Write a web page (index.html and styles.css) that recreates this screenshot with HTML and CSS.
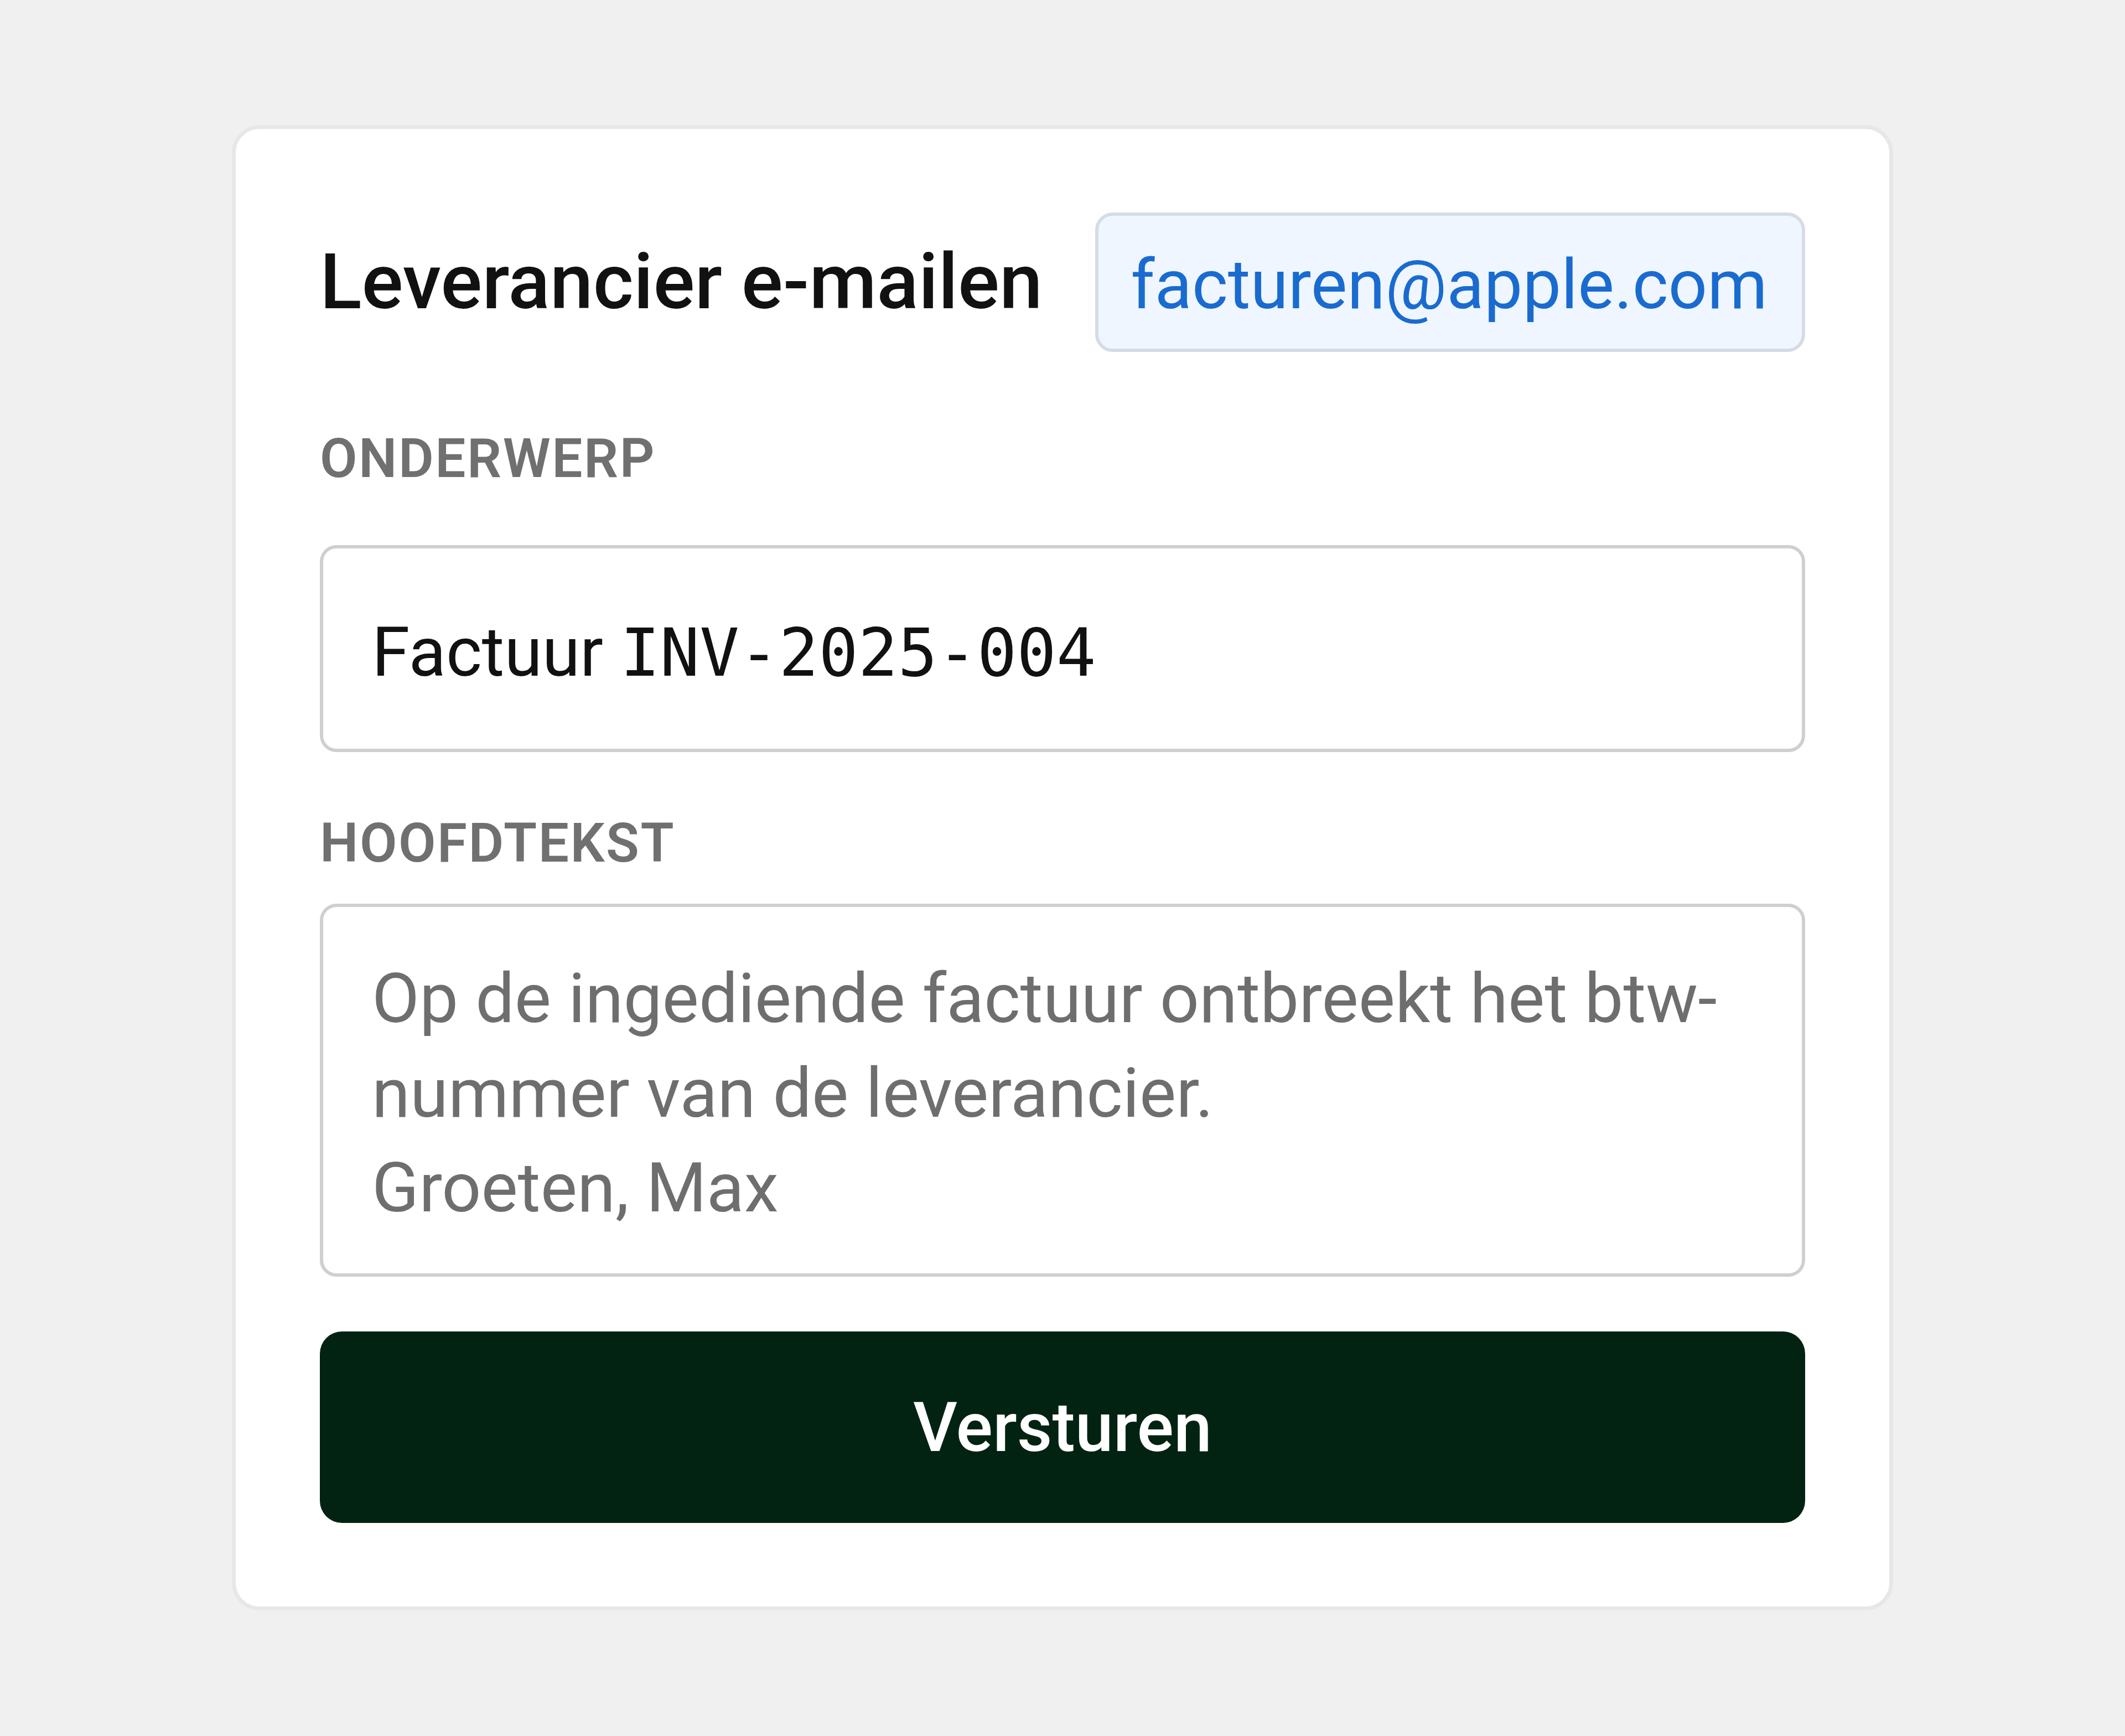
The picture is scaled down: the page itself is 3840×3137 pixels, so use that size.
FILE: index.html
```html
<!DOCTYPE html>
<html lang="nl">
<head>
    <meta charset="UTF-8">
    <meta name="viewport" content="width=device-width, initial-scale=1.0">
    <title>Leverancier e-mailen</title>
    <link rel="stylesheet" href="styles.css">
</head>
<body>
    <div class="kaart">
        <section class="kop">
            <h1 class="titel">Leverancier e-mailen</h1>
            <span class="adres">facturen@apple.com</span>
        </section>
        <p class="label label-onderwerp">ONDERWERP</p>
        <div class="veld">Factuur <span class="code">INV-2025-004</span></div>
        <p class="label label-tekst">HOOFDTEKST</p>
        <div class="tekstvak">Op de ingediende factuur ontbreekt het btw-<br>nummer van de leverancier.<br>Groeten, Max</div>
        <button class="versturen">Versturen</button>
    </div>
</body>
</html>
```

FILE: styles.css
```css
body{
    margin: 0;
    background: #f0f0f0;
    font-family: Roboto, "Liberation Sans", sans-serif;
}
.kaart{
    box-sizing: border-box;
    width: 3002px;
    margin: 226px auto 0;
    padding: 151px 152px;
    background: #ffffff;
    border: 7px solid #e7e7e7;
    border-radius: 50px;
}
.kop{
    display: flex;
    justify-content: space-between;
    align-items: baseline;
}
.titel{
    margin: 0;
    font-size: 140px;
    font-weight: 500;
    color: #111111;
}
.adres{
    padding: 52px 62px 43px 58px;
    font-size: 124px;
    color: #1a6bd0;
    background: #eff6ff;
    border: 6px solid #d5dce5;
    border-radius: 32px;
}
.label{
    margin: 0;
    font-size: 98px;
    line-height: 100px;
    font-weight: 600;
    letter-spacing: 2.5px;
    color: #707070;
}
.label-onderwerp{
    margin-top: 143px;
    margin-bottom: 106px;
}
.label-tekst{
    margin-top: 115px;
    margin-bottom: 59px;
}
.veld{
    box-sizing: border-box;
    height: 374px;
    padding: 115px 88px 0;
    font-size: 124px;
    line-height: 145px;
    color: #111111;
    border: 6px solid #cfcfcf;
    border-radius: 30px;
}
.code{
    font-family: "DejaVu Sans Mono", "Liberation Mono", monospace;
    font-size: 119px;
    line-height: 1;
}
.tekstvak{
    box-sizing: border-box;
    height: 674px;
    padding: 80px 88px 0;
    font-size: 125px;
    line-height: 171px;
    color: #6e6e6e;
    border: 6px solid #cfcfcf;
    border-radius: 30px;
}
.versturen{
    display: block;
    width: 100%;
    height: 346px;
    margin-top: 99px;
    padding: 0;
    font-family: Roboto, "Liberation Sans", sans-serif;
    font-size: 124px;
    font-weight: 500;
    color: #ffffff;
    background: #022312;
    border: none;
    border-radius: 40px;
}
```
